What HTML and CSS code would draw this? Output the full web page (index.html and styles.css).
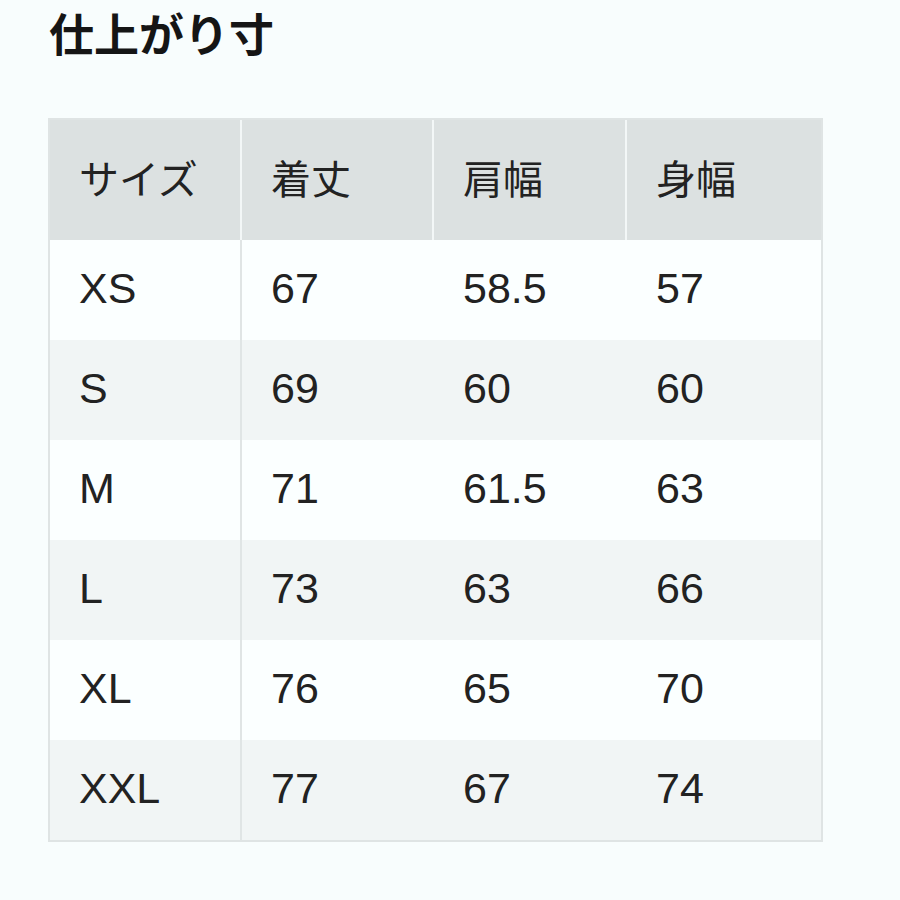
FILE: index.html
```html
<!DOCTYPE html>
<html lang="ja">
<head>
<meta charset="utf-8">
<link rel="stylesheet" href="styles.css">
</head>
<body>
<div class="page">
  <h1 class="title">仕上がり寸</h1>
  <div class="table">
    <div class="row head">
      <div class="cell first">サイズ</div>
      <div class="cell">着丈</div>
      <div class="cell">肩幅</div>
      <div class="cell">身幅</div>
    </div>
    <div class="row">
      <div class="cell first">XS</div><div class="cell">67</div><div class="cell">58.5</div><div class="cell">57</div>
    </div>
    <div class="row stripe">
      <div class="cell first">S</div><div class="cell">69</div><div class="cell">60</div><div class="cell">60</div>
    </div>
    <div class="row">
      <div class="cell first">M</div><div class="cell">71</div><div class="cell">61.5</div><div class="cell">63</div>
    </div>
    <div class="row stripe">
      <div class="cell first">L</div><div class="cell">73</div><div class="cell">63</div><div class="cell">66</div>
    </div>
    <div class="row">
      <div class="cell first">XL</div><div class="cell">76</div><div class="cell">65</div><div class="cell">70</div>
    </div>
    <div class="row stripe">
      <div class="cell first">XXL</div><div class="cell">77</div><div class="cell">67</div><div class="cell">74</div>
    </div>
  </div>
</div>
</body>
</html>
```

FILE: styles.css
```css
html, body {
  margin: 0;
  padding: 0;
  background: #f8fdfd;
}
.page {
  padding: 8px 0 0 48px;
  font-family: "Liberation Sans", Arial, "Noto Sans CJK JP", sans-serif;
  color: #222;
}
.title {
  margin: 0 0 0 1px;
  font-family: "Noto Sans CJK JP", sans-serif;
  font-weight: 700;
  font-size: 45px;
  line-height: 50px;
  color: #151515;
}
.table {
  margin-top: 60px;
  width: 771px;
  border: 2px solid #dfe4e4;
  background: #fbffff;
}
.row {
  display: grid;
  grid-template-columns: 192px 192px 193px 1fr;
  height: 100px;
}
.row.head {
  height: 120px;
  background: #dce1e1;
}
.row.stripe {
  background: #f1f5f5;
}
.cell {
  display: flex;
  align-items: center;
  padding-left: 29px;
  font-size: 43px;
  padding-bottom: 3px;
}
.cell.first {
  border-right: 2px solid #e0e5e5;
}
.head .cell {
  font-family: "Noto Sans CJK JP", sans-serif;
  font-size: 40px;
  padding-bottom: 6px;
  color: #222;
  border-right: 2px solid #f3f7f7;
}
.head .cell:last-child {
  border-right: none;
}
```
